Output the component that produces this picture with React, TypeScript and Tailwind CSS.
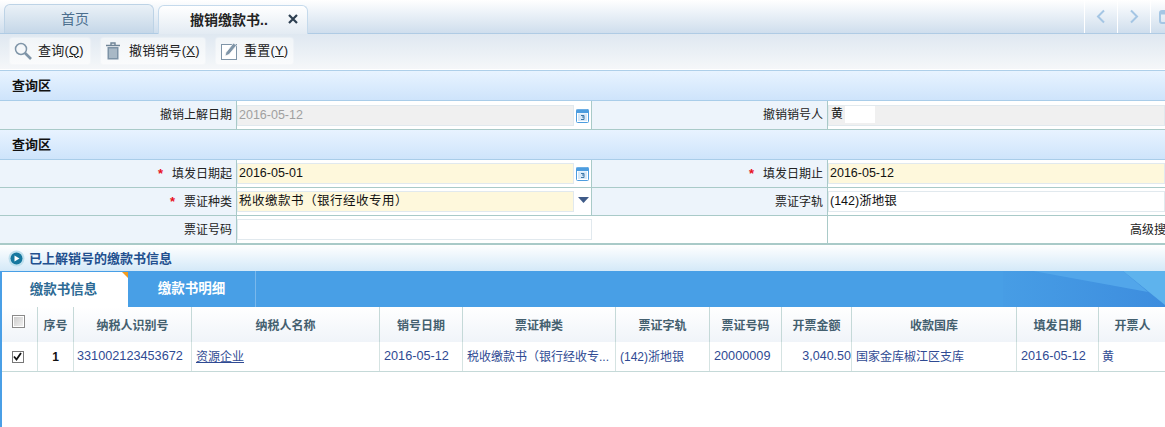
import React from "react";

const cols = [
  { w: 36, t: "", v: "" },
  { w: 36, t: "序号", v: "1" },
  { w: 118, t: "纳税人识别号", v: "331002123453672" },
  { w: 188, t: "纳税人名称", v: "资源企业" },
  { w: 83, t: "销号日期", v: "2016-05-12" },
  { w: 153, t: "票证种类", v: "税收缴款书（银行经收专..." },
  { w: 94, t: "票证字轨", v: "(142)浙地银" },
  { w: 72, t: "票证号码", v: "20000009" },
  { w: 70, t: "开票金额", v: "3,040.50" },
  { w: 165, t: "收款国库", v: "国家金库椒江区支库" },
  { w: 82, t: "填发日期", v: "2016-05-12" },
  { w: 67, t: "开票人", v: "黄" },
];

const Star = () => <span className="text-[#e8101c] mr-[9px] font-bold text-[13px]">*</span>;

const Calendar = () => (
  <svg width="13" height="15" viewBox="0 0 13 15" className="shrink-0">
    <rect x="0.5" y="1.5" width="12" height="13" rx="1" fill="#fff" stroke="#4d9ddf" />
    <rect x="0.5" y="1.5" width="12" height="3.5" fill="#4d9ddf" />
    <path d="M2 1v1M4 1v1M6 1v1M8 1v1M10 1v1" stroke="#8fc0ea" />
    <rect x="2" y="5.5" width="9" height="7.5" fill="#d6e8f8" />
    <path d="M5 7.5h3v1.5h-2M8 9v2.5h-3" stroke="#3f78a8" fill="none" />
  </svg>
);

const Label = ({ children, star }: { children: React.ReactNode; star?: boolean }) => (
  <div className="h-full bg-[#edf4fb] border-r border-[#a9cac8] flex items-center justify-end pr-[4px] text-[#222]">
    {star && <Star />}
    {children}
  </div>
);

const Field = ({
  value,
  bg = "bg-white",
  text = "text-[#111]",
  tail,
  extra = "",
}: {
  value: string;
  bg?: string;
  text?: string;
  tail?: React.ReactNode;
  extra?: string;
}) => (
  <div className="h-full flex items-center border-r border-[#a9cac8]">
    <div className={`w-[337px] h-[21px] ${bg} ${text} ${extra} text-[12.5px] border border-[#e1e9ee] flex items-center pl-[1px] overflow-hidden whitespace-nowrap`}>
      {value}
    </div>
    {tail}
  </div>
);

const Section = () => (
  <div className="h-[30px] bg-gradient-to-b from-[#e8f3ff] to-[#cee4fb] border-b border-[#a9cde9] flex items-center pl-[12px] font-bold text-[#111] text-[13px]">
    查询区
  </div>
);

const ToolBtn = ({ icon, label, k, w }: { icon: React.ReactNode; label: string; k: string; w: string }) => (
  <div className={`${w} h-[26px] bg-gradient-to-b from-[#f1f5f8] to-[#fafbfc] rounded-[2px] flex items-center pl-[4px] text-[13px] tracking-[0.2px] text-[#222] shadow-[0_0_2px_#fff]`}>
    {icon}
    <span className="whitespace-nowrap -mt-[2px]">
      {label}(<span className="underline">{k}</span>)
    </span>
  </div>
);

export default function App() {
  return (
    <div
      className="w-[1165px] h-[427px] overflow-hidden bg-white text-[12px] leading-none"
      style={{ fontFamily: '"Liberation Sans","Noto Sans CJK SC",sans-serif' }}
    >
      {/* page tabs */}
      <div className="h-[34px] bg-gradient-to-b from-white to-[#cfdeed] border-b border-[#afcbe4] flex items-end pl-[4px] gap-[4px] relative">
        <div className="w-[150px] h-[29px] rounded-t-[6px] border border-b-0 border-[#bdd3e6] bg-gradient-to-b from-[#eaf1f7] to-[#c5d7e8] flex items-center justify-center pr-[8px] text-[14px] text-[#4c6f8e]">
          首页
        </div>
        <div className="w-[150px] h-[29px] rounded-t-[6px] border border-b-0 border-[#c5daec] bg-gradient-to-b from-white to-[#e3ebf3] -mb-px flex items-center pl-[31px] text-[14px] font-bold text-[#222]">
          <span>撤销缴款书..</span>
          <svg width="10" height="10" viewBox="0 0 10 10" className="ml-[20px] -mt-[2px]">
            <path d="M1 1l8 8M9 1l-8 8" stroke="#2c3e50" strokeWidth="2.2" />
          </svg>
        </div>
        <div className="ml-auto flex h-full">
          <div className="w-[33px] border-l border-white flex items-center justify-center">
            <svg width="10" height="15" viewBox="0 0 10 15"><path d="M8 1.5 2 7.5l6 6" fill="none" stroke="#a5c6e4" strokeWidth="2" /></svg>
          </div>
          <div className="w-[33px] border-l border-white flex items-center justify-center">
            <svg width="10" height="15" viewBox="0 0 10 15"><path d="M2 1.5l6 6-6 6" fill="none" stroke="#a5c6e4" strokeWidth="2" /></svg>
          </div>
          <div className="w-[15px] border-l border-white flex items-center pl-[8px] overflow-hidden">
            <svg width="14" height="14" viewBox="0 0 14 14" className="shrink-0"><rect x="1" y="1" width="12" height="12" rx="2" fill="none" stroke="#a5c6e4" strokeWidth="2" /><path d="M1 3h12" stroke="#a5c6e4" strokeWidth="3" /></svg>
          </div>
        </div>
      </div>
      {/* toolbar */}
      <div className="h-[36px] bg-gradient-to-b from-[#dfe8f1] to-[#f5f7f9] border-b border-white flex items-center pl-[10px] gap-[11px] pb-[1px]">
        <ToolBtn
          w="w-[80px]"
          label="查询"
          k="Q"
          icon={
            <svg width="18" height="18" viewBox="0 0 18 18" className="mr-[6px]">
              <circle cx="7" cy="7" r="5.5" fill="none" stroke="#7f95a8" strokeWidth="1.5" />
              <path d="M11 11 17 17" stroke="#7f95a8" strokeWidth="2.6" />
            </svg>
          }
        />
        <ToolBtn
          w="w-[104px]"
          label="撤销销号"
          k="X"
          icon={
            <svg width="14" height="18" viewBox="0 0 14 18" className="mr-[9px] ml-[1px]">
              <path d="M0 3.5h14M5 3V1h4v2" fill="none" stroke="#6f8496" strokeWidth="1.4" />
              <path d="M1.5 5h11v12.5h-11z" fill="#7d93a6" />
              <path d="M4 6.5v9.5M6 6.5v9.5M8 6.5v9.5M10 6.5v9.5" stroke="#d5dee6" />
            </svg>
          }
        />
        <ToolBtn
          w="w-[77px]"
          label="重置"
          k="Y"
          icon={
            <svg width="18" height="18" viewBox="0 0 18 18" className="mr-[6px]">
              <rect x="1.5" y="2.5" width="15" height="15" fill="#fff" stroke="#7f95a8" />
              <path d="M5 14l1-3.5L13.5 1l3 2.5L9 12.5z" fill="#7f95a8" stroke="#fff" strokeWidth="0.7" />
            </svg>
          }
        />
      </div>
      <div className="h-px bg-[#aecfe9]" />

      <Section />
      <div className="h-[29px] grid grid-cols-[237px_355px_236px_337px] border-b border-[#a9cac8] bg-white">
        <Label>撤销上解日期</Label>
        <Field
          value="2016-05-12"
          bg="bg-[#f0f0f0]"
          text="text-[#a0a0a0]"
          tail={<div className="ml-[2px]"><Calendar /></div>}
        />
        <Label>撤销销号人</Label>
        <div className="h-full flex items-center">
          <div className="w-[337px] h-[21px] bg-[#f0f0f0] border border-[#e1e9ee] flex items-center text-[#111]">
            <span className="w-[16px] pl-[2px] -mt-[3px]">黄</span>
            <span className="bg-white w-[30px] h-[17px] -mt-[2px]" />
          </div>
        </div>
      </div>

      <Section />
      <div className="h-[28px] grid grid-cols-[237px_355px_236px_337px] border-b border-[#a9cac8] bg-white">
        <Label star>填发日期起</Label>
        <Field value="2016-05-01" bg="bg-[#fef8dc]" tail={<div className="ml-[2px]"><Calendar /></div>} />
        <Label star>填发日期止</Label>
        <div className="h-full flex items-center">
          <div className="w-[337px] h-[21px] bg-[#fef8dc] border border-[#e1e9ee] flex items-center pl-px text-[12.5px] text-[#111]">2016-05-12</div>
        </div>
      </div>
      <div className="h-[28px] grid grid-cols-[237px_355px_236px_337px] border-b border-[#a9cac8] bg-white">
        <Label star>票证种类</Label>
        <Field
          value="税收缴款书（银行经收专用）"
          bg="bg-[#fef8dc]"
          extra="tracking-[0.5px]"
          tail={
            <svg width="11" height="6" viewBox="0 0 11 6" className="ml-[4px] -mt-[4px]">
              <path d="M0 0h11L5.5 6z" fill="#3f5b88" />
            </svg>
          }
        />
        <Label>票证字轨</Label>
        <div className="h-full flex items-center">
          <div className="w-[337px] h-[21px] bg-white border border-[#e1e9ee] flex items-center pl-px text-[12.5px] text-[#111]">(142)浙地银</div>
        </div>
      </div>
      <div className="h-[27px] grid grid-cols-[237px_591px_337px] bg-white">
        <Label>票证号码</Label>
        <div className="h-full flex items-center border-r border-[#a9cac8]">
          <div className="w-[355px] h-[21px] bg-white border border-[#e1e9ee]" />
        </div>
        <div className="h-full flex items-center pl-[302px] whitespace-nowrap text-[#222]">高级搜索</div>
      </div>
      <div className="h-[2px] bg-[#a9cac8]" />

      {/* panel title */}
      <div className="h-[26px] bg-gradient-to-b from-white to-[#d4e9f8] flex items-center pl-[8px] pt-[1px] font-bold text-[13px] text-[#22508f]">
        <svg width="17" height="17" viewBox="0 0 17 17" className="mr-[4px]">
          <circle cx="8.5" cy="8.5" r="8" fill="#bfe0ee" />
          <circle cx="8.5" cy="8.5" r="6" fill="#16789f" />
          <path d="M6.5 5.5v6l5-3z" fill="#fff" />
        </svg>
        已上解销号的缴款书信息
      </div>

      {/* grid panel */}
      <div className="border-l-2 border-[#4a9fe6] h-[156px]">
        <div className="h-[36px] bg-[#489fe6] flex relative overflow-hidden">
          <div className="w-[126px] pr-[3px] mt-px bg-white flex items-center justify-center font-bold text-[13.5px] text-[#2d6a94] relative">
            缴款书信息
            <span className="absolute right-0 top-0 w-0 h-0 border-l-[6px] border-l-transparent border-t-[6px] border-t-[#f29c1f]" />
          </div>
          <div className="w-[128px] border-r border-[#79b8ec] flex items-center justify-center font-bold text-[13.5px] text-white">缴款书明细</div>
          <svg className="absolute right-0 top-0" width="162" height="36" viewBox="0 0 162 36">
            <defs>
              <linearGradient id="tabbg" x1="0" y1="0" x2="1" y2="0">
                <stop offset="0" stopColor="#479de5" />
                <stop offset="1" stopColor="#3d8dde" />
              </linearGradient>
            </defs>
            <rect width="162" height="36" fill="url(#tabbg)" />
            <path d="M30 0H120L145 21Z" fill="#52a6ea" />
            <path d="M120 0H162V34Z" fill="#5eb3ed" />
          </svg>
        </div>
        <div className="flex h-[35px] bg-gradient-to-b from-white to-[#f0f4f9] font-bold text-[#44606f]">
          {cols.map((c, i) => (
            <div
              key={i}
              style={{ width: c.w }}
              className={`shrink-0 h-full flex items-center justify-center pt-[3px] ${i < cols.length - 1 ? "border-r border-[#c5d9d8]" : ""}`}
            >
              {i === 0 ? (
                <span className="block w-[13px] h-[13px] mb-[10px] -ml-[3px] border border-[#8a8a8a] bg-gradient-to-br from-[#c9c9c9] to-[#f4f4f4] shadow-[inset_0_0_0_1px_#fff]" />
              ) : (
                c.t
              )}
            </div>
          ))}
        </div>
        <div className="flex h-[30px] border-b border-[#c5d9d8] text-[#2f4a93]">
          {cols.map((c, i) => (
            <div
              key={i}
              style={{ width: c.w }}
              className={`shrink-0 h-full flex items-center whitespace-nowrap overflow-hidden ${i < cols.length - 1 ? "border-r border-[#d5e3e2]" : ""} ${
                i === 1
                  ? "justify-center font-bold text-[#111]"
                  : i === 8
                    ? "justify-end text-[12.5px]"
                    : i === 0
                      ? "justify-center"
                      : i === 2
                        ? "pl-[3px] text-[12.7px]"
                        : i === 4 || i === 10
                          ? "pl-[4px] text-[12.7px]"
                          : i === 7
                            ? "pl-[4px] text-[12.7px]"
                            : i === 11
                              ? "pl-[3px]"
                              : "pl-[4px]"
              } ${i === 3 ? "underline" : ""}`}
            >
              {i === 0 ? (
                <span className="flex items-center justify-center w-[12px] h-[12px] -ml-[4px] border border-[#777] bg-white">
                  <svg width="9" height="9" viewBox="0 0 9 9"><path d="M1 4.5 3.5 7.5 8 1" fill="none" stroke="#111" strokeWidth="1.8" /></svg>
                </span>
              ) : (
                c.v
              )}
            </div>
          ))}
        </div>
      </div>
    </div>
  );
}
